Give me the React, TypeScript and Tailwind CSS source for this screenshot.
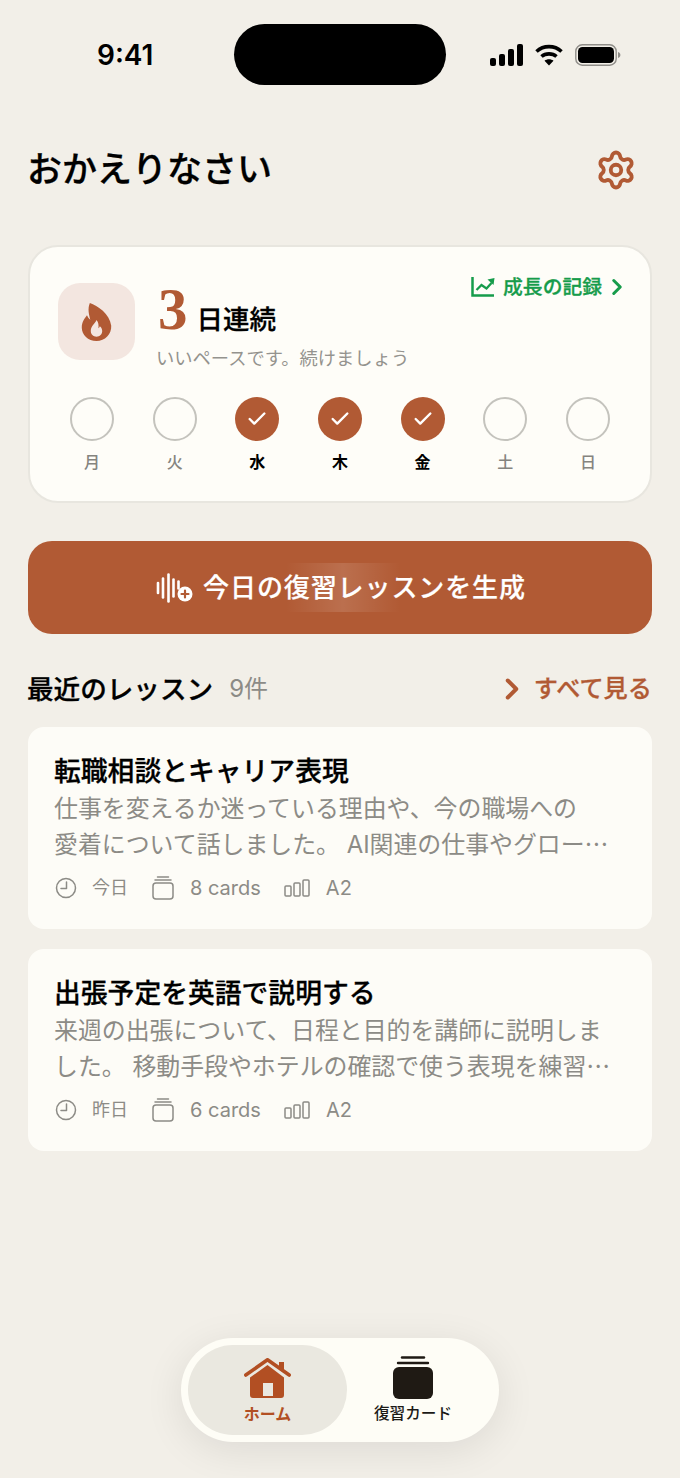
import React from "react";
import { Check, ChevronRight, Settings } from "lucide-react";

const FONT = "font-['Inter','Noto_Sans_CJK_JP',sans-serif]";

function Signal() {
  return (
    <svg width="34" height="22" viewBox="0 0 34 22" fill="black">
      <rect x="0" y="14" width="6" height="8" rx="2" />
      <rect x="9" y="10" width="6" height="12" rx="2" />
      <rect x="18" y="5" width="6" height="17" rx="2" />
      <rect x="27" y="0" width="6" height="22" rx="2" />
    </svg>
  );
}

function Wifi() {
  return (
    <svg width="28" height="22" viewBox="0 0 28 22" fill="none" stroke="black" strokeWidth="3.6">
      <path d="M1.5 7.5C8.5 1 19.5 1 26.5 7.5" />
      <path d="M6.5 12.5C10.5 9 17.5 9 21.5 12.5" />
      <path d="M14 21.5L9.5 16.8C12 14.8 16 14.8 18.5 16.8Z" fill="black" stroke="none" />
    </svg>
  );
}

function Battery() {
  return (
    <svg width="46" height="22" viewBox="0 0 46 22" fill="none">
      <rect x="0.8" y="0.8" width="40.4" height="20.4" rx="6.5" stroke="#8f8d88" strokeWidth="1.4" />
      <rect x="3" y="3" width="36" height="16" rx="4.5" fill="black" />
      <path d="M43 8v6c1.6-.6 2.4-1.7 2.4-3s-.8-2.4-2.4-3z" fill="#8f8d88" />
    </svg>
  );
}

function Flame() {
  return (
    <svg width="31" height="38" viewBox="0 0 32 40">
      <path
        fillRule="evenodd"
        fill="#b15a34"
        d="M9 0c8 3 21 11 22.500 24C32 33 25 40 16 40 7 40 0.500 33.500 0.500 26c0-6 3-9.500 5.500-13 .8 2 1.800 3.500 3.500 4.500C8 12 6.500 6 9 0zM16 18c-1 3.500-6 6-6 11.500C10 33 12.500 35.500 16 35.500s6-2.500 6-6c0-2.500-1.300-4-2.500-5-.3 1-.8 1.600-1.500 2C18.500 23.500 18 20.500 16 18z"
      />
    </svg>
  );
}

function GrowthIcon() {
  return (
    <svg width="24" height="22" viewBox="0 0 24 22" fill="none" stroke="#169c4b">
      <path d="M1.500 1v18.500H23" strokeWidth="2.500" />
      <path d="M5.500 14l5-5 5 3.500 5-5.500" strokeWidth="2.300" />
      <path d="M16.500 3.500L23.500 2l-1 7z" fill="#169c4b" stroke="none" />
    </svg>
  );
}

function Day({ label, done }: { label: string; done?: boolean }) {
  return (
    <div className="flex flex-col items-center w-[44px]">
      {done ? (
        <div className="w-[44px] h-[44px] rounded-full bg-[#b15a34] flex items-center justify-center">
          <Check size={22} color="#fff" strokeWidth={2.6} />
        </div>
      ) : (
        <div className="w-[44px] h-[44px] rounded-full border-[2.5px] border-[#c4c3bd]" />
      )}
      <span className={`mt-[9px] text-[16px] leading-[24px] ${done ? "text-black font-semibold" : "text-[#85847f] font-medium"}`}>
        {label}
      </span>
    </div>
  );
}

function WaveIcon() {
  return (
    <svg width="37" height="30" viewBox="0 0 37 30" fill="none">
      <g stroke="#fff" strokeWidth="2.600" strokeLinecap="round">
        <path d="M2 10v10" />
        <path d="M7 5.500v19" />
        <path d="M12.500 1.500v27" />
        <path d="M17.500 6.500v17" />
        <path d="M22.500 8.500v7" />
      </g>
      <circle cx="29" cy="21" r="7.500" fill="#fff" />
      <path d="M29 17.500v7M25.500 21h7" stroke="#b15a34" strokeWidth="2.200" strokeLinecap="round" />
    </svg>
  );
}

function Meta({ when, cards }: { when: string; cards: string }) {
  return (
    <div className="flex items-center mt-[12px] ml-[1px] text-[20px] leading-[28px] text-[#8c8b86]">
      <svg width="22" height="22" viewBox="0 0 22 22" fill="none" stroke="#8c8b86" strokeWidth="1.500">
        <circle cx="11" cy="11" r="9.500" />
        <path d="M11.500 5v6.500H6" strokeLinecap="round" strokeLinejoin="round" />
      </svg>
      <span className="ml-[15px] text-[18px]">{when}</span>
      <svg className="ml-[24px]" width="22" height="24" viewBox="0 0 22 24" fill="none" stroke="#8c8b86" strokeWidth="1.500">
        <rect x="1" y="7" width="20" height="16" rx="3" />
        <path d="M3 4h16M5.500 1h11" strokeLinecap="round" />
      </svg>
      <span className="ml-[16px]">{cards}</span>
      <svg className="ml-[23px]" width="26" height="18" viewBox="0 0 26 18" fill="none" stroke="#8c8b86" strokeWidth="1.500">
        <rect x="1" y="7" width="6" height="10" rx="1" />
        <rect x="10" y="4" width="6" height="13" rx="1" />
        <rect x="19" y="1" width="6" height="16" rx="1" />
      </svg>
      <span className="ml-[16px]">A2</span>
    </div>
  );
}

function LessonCard({ title, l1, l2, when, cards }: { title: string; l1: string; l2: string; when: string; cards: string }) {
  return (
    <div className="bg-[#fdfcf7] rounded-[16px] h-[202px] pl-[26px] pr-[24px] pt-[24px]">
      <div className="text-[26.800px] leading-[40px] font-medium [-webkit-text-stroke:0.3px_currentColor] text-black whitespace-nowrap">{title}</div>
      <div className="mt-[1px] text-[23.900px] leading-[34px] text-[#8c8b86]">
        <div className="whitespace-nowrap">{l1}</div>
        <div className="whitespace-nowrap">
          {l2}
          <span className="font-['Noto_Sans_CJK_JP',sans-serif]">…</span>
        </div>
      </div>
      <Meta when={when} cards={cards} />
    </div>
  );
}

export default function App() {
  return (
    <div className={`${FONT} relative w-[680px] h-[1478px] bg-[#f2efe8] overflow-hidden flex flex-col`}>
      {/* Status bar */}
      <div className="h-[110px] shrink-0 flex items-start relative">
        <span className="ml-[97px] mt-[37px] text-[28px] leading-[36px] font-semibold text-black">9:41</span>
        <div className="absolute left-[234px] top-[24px] w-[212px] h-[61px] bg-black rounded-full" />
        <div className="ml-auto mr-[59px] mt-[44px] flex items-center gap-[12px]">
          <Signal />
          <span className="-ml-[1px]"><Wifi /></span>
          <Battery />
        </div>
      </div>

      {/* Header */}
      <div className="flex items-center justify-between pl-[27px] pr-[43px] mt-[37px] h-[44px]">
        <h1 className="text-[35px] leading-[44px] font-medium [-webkit-text-stroke:0.3px_currentColor] text-black whitespace-nowrap">おかえりなさい</h1>
        <Settings className="mt-[2px]" size={42} color="#b15a34" strokeWidth={2.2} />
      </div>

      {/* Streak card */}
      <div className="mx-[28px] mt-[54px] h-[258px] rounded-[30px] bg-[#fefdf8] border-2 border-[#e8e6df] px-[28px] pt-[36px] relative">
        <div className="flex">
          <div className="w-[77px] h-[77px] rounded-[22px] bg-[#f3e6e0] flex items-center justify-center">
            <Flame />
          </div>
          <div className="ml-[23px] -mt-[5px]">
            <div className="flex items-baseline h-[62px]">
              <span className="font-['Liberation_Serif',serif] font-bold text-[59px] leading-[62px] text-[#b15a34]">3</span>
              <span className="ml-[9px] text-[26.500px] leading-[36px] font-medium [-webkit-text-stroke:0.3px_currentColor] text-black">日連続</span>
            </div>
            <div className="mt-[5px] -ml-[2px] text-[18.300px] leading-[26px] text-[#94938e] whitespace-nowrap">いいペースです。続けましょう</div>
          </div>
          <div className="ml-auto -mr-[8px] -mt-[8px] h-[24px] flex items-center text-[#169c4b]">
            <GrowthIcon />
            <span className="ml-[8px] text-[19.800px] leading-[24px] font-medium [-webkit-text-stroke:0.3px_currentColor] whitespace-nowrap">成長の記録</span>
            <ChevronRight className="ml-[2px]" size={26} strokeWidth={2.800} />
          </div>
        </div>
        <div className="flex justify-between px-[12px] mt-[26px]">
          <Day label="月" />
          <Day label="火" />
          <Day label="水" done />
          <Day label="木" done />
          <Day label="金" done />
          <Day label="土" />
          <Day label="日" />
        </div>
      </div>

      {/* CTA */}
      <div className="relative mx-[28px] mt-[38px] h-[93px] rounded-[24px] bg-[#b15a34] flex items-center justify-center overflow-hidden shrink-0">
        <div className="absolute left-[258px] top-[22px] w-[114px] h-[49px] bg-[linear-gradient(90deg,rgba(255,255,255,0),rgba(255,255,255,0.13)_50%,rgba(255,255,255,0))]" />
        <div className="relative flex items-center translate-x-[1px]">
          <WaveIcon />
          <span className="ml-[10px] text-[26px] tracking-[0.9px] leading-[36px] font-medium [-webkit-text-stroke:0.2px_currentColor] text-white whitespace-nowrap">今日の復習レッスンを生成</span>
        </div>
      </div>

      {/* Section header */}
      <div className="flex items-center mx-[28px] mt-[36px] h-[38px]">
        <span className="-ml-[1px] text-[26.600px] leading-[38px] font-medium [-webkit-text-stroke:0.3px_currentColor] text-black whitespace-nowrap">最近のレッスン</span>
        <span className="ml-[16px] text-[24px] leading-[38px] text-[#8c8b86]">9件</span>
        <div className="ml-auto flex items-center text-[#b15a34]">
          <ChevronRight size={34} strokeWidth={2.800} />
          <span className="ml-[5px] text-[24.200px] leading-[38px] font-medium [-webkit-text-stroke:0.3px_currentColor] whitespace-nowrap">すべて見る</span>
        </div>
      </div>

      {/* Lessons */}
      <div className="mx-[28px] mt-[19px] flex flex-col gap-[20px]">
        <LessonCard
          title="転職相談とキャリア表現"
          l1="仕事を変えるか迷っている理由や、今の職場への"
          l2="愛着について話しました。 AI関連の仕事やグロー"
          when="今日"
          cards="8 cards"
        />
        <LessonCard
          title="出張予定を英語で説明する"
          l1="来週の出張について、日程と目的を講師に説明しま"
          l2="した。 移動手段やホテルの確認で使う表現を練習"
          when="昨日"
          cards="6 cards"
        />
      </div>

      {/* Bottom nav */}
      <div className="mt-auto mb-[36px] mx-auto w-[318px] h-[104px] rounded-full bg-[#fefdf6] p-[7px] flex shadow-[0_8px_40px_rgba(0,0,0,0.09)]">
        <div className="w-[159px] h-[90px] rounded-full bg-[#eae8e0] flex flex-col items-center pt-[13px]">
          <svg width="47" height="41" viewBox="0 0 47 41">
            <path d="M1.800 17L23.500 1.800 45.200 17" fill="none" stroke="#b24f23" strokeWidth="3.600" strokeLinecap="round" strokeLinejoin="round" />
            <path d="M35 4h5v11l-5-3.500z" fill="#b24f23" />
            <path fillRule="evenodd" fill="#b24f23" d="M23.500 7L40 19.500V37c0 2-1 3-3 3H9c-2 0-3-1-3-3V19.500zM19 25v13h10V25z" />
          </svg>
          <span className="mt-[5px] text-[16px] leading-[20px] font-semibold text-[#b24f23]">ホーム</span>
        </div>
        <div className="flex-1 flex flex-col items-center pt-[11px] pr-[13px]">
          <svg width="40" height="43" viewBox="0 0 40 43">
            <rect x="0" y="11" width="40" height="32" rx="6" fill="#1f1a14" />
            <path d="M5 7h30" stroke="#1f1a14" strokeWidth="2.400" strokeLinecap="round" />
            <path d="M9 1.500h22" stroke="#1f1a14" strokeWidth="2.400" strokeLinecap="round" />
          </svg>
          <span className="mt-[5px] text-[15.600px] leading-[20px] font-medium text-[#1c1a16] whitespace-nowrap">復習カード</span>
        </div>
      </div>
    </div>
  );
}
